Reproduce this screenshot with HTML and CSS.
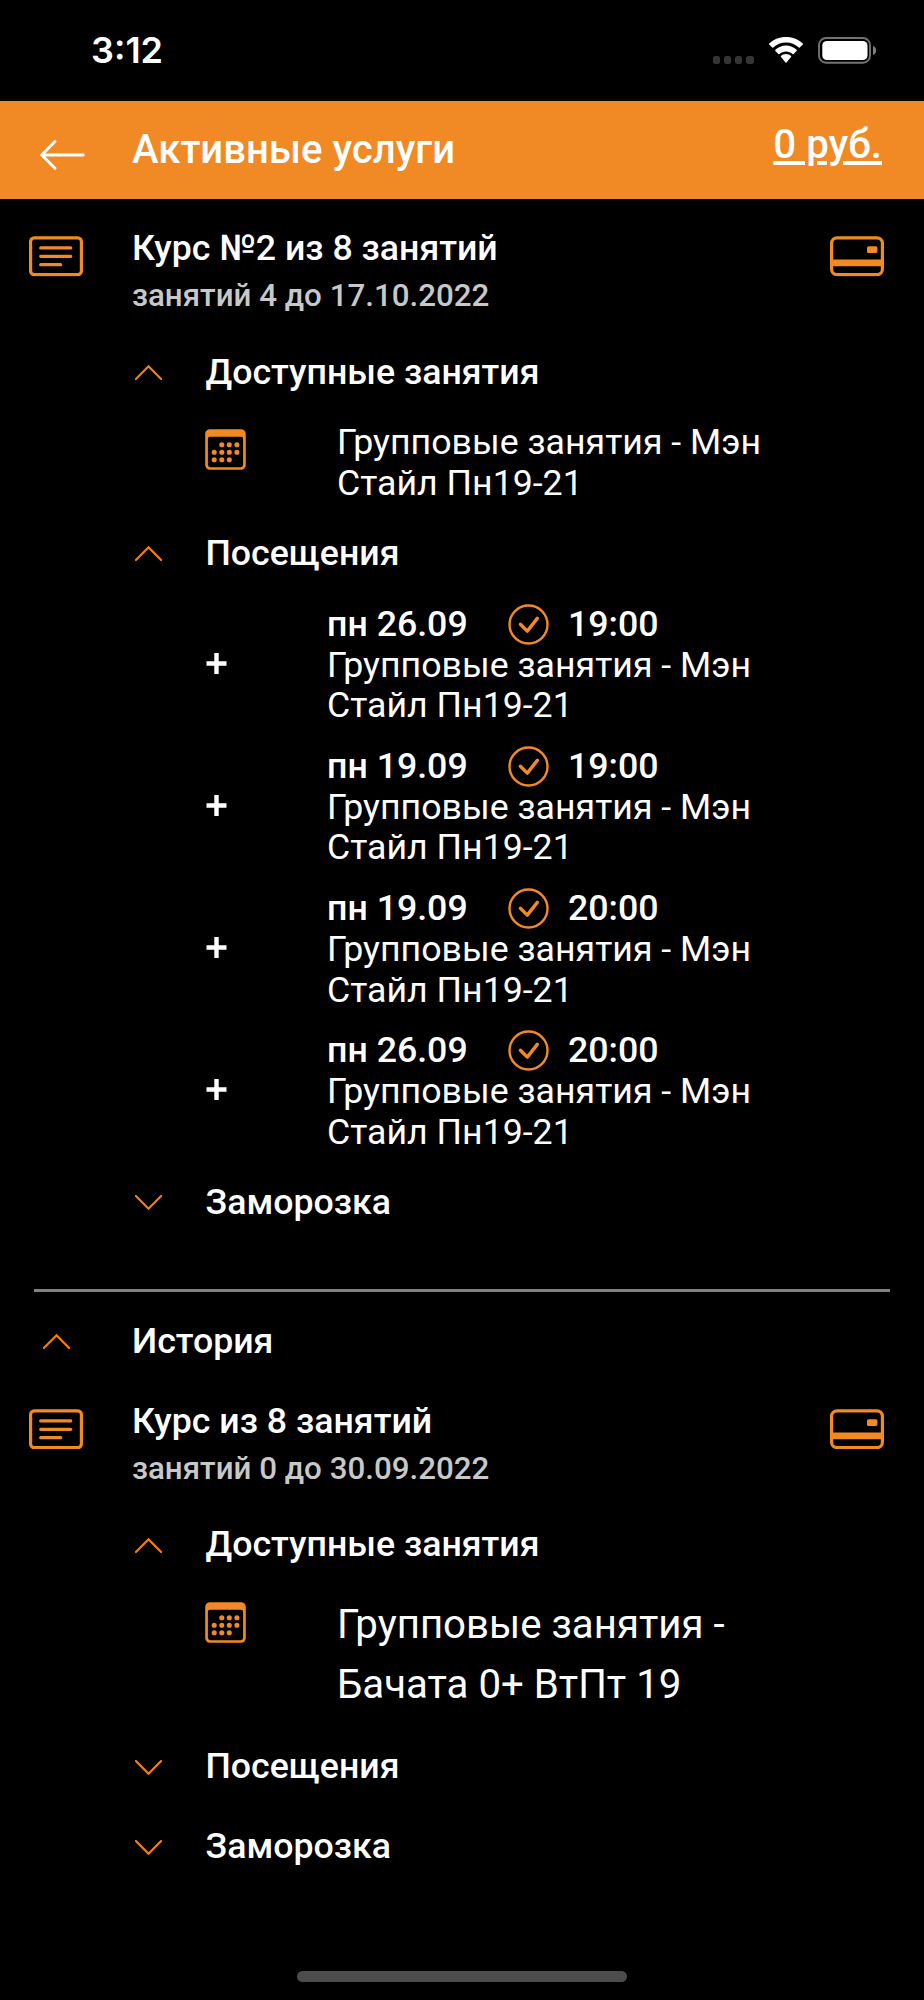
FILE: index.html
```html
<!DOCTYPE html>
<html lang="ru">

<head>
    <meta charset="UTF-8" />
    <title>Активные услуги</title>
    <link rel="stylesheet" href="styles.css">
</head>

<body>

    <!-- иконки -->
    <svg class="sprite">
        <symbol id="list" viewBox="0 0 54 40">
            <rect x="1.6" y="1.6" width="50.8" height="36.8" rx="3.6" fill="none" stroke="currentColor" stroke-width="3.2" />
            <path d="M11.7 11.7h30M11.7 20.1h30M11.7 28.4h20" fill="none" stroke="currentColor" stroke-width="3.2" stroke-linecap="round" />
        </symbol>
        <symbol id="card" viewBox="0 0 54 40">
            <rect x="1.6" y="1.6" width="50.8" height="36.8" rx="5.4" fill="none" stroke="currentColor" stroke-width="3.2" />
            <path d="M2 23.3h50v6.6H2z" fill="currentColor" />
            <rect x="37" y="10" width="10.4" height="6.8" rx="1.6" fill="currentColor" />
        </symbol>
        <symbol id="calendar" viewBox="0 0 41 41">
            <path fill="currentColor" fill-rule="evenodd" d="M5 .2h31a4.8 4.8 0 0 1 4.8 4.8v31a4.8 4.8 0 0 1-4.8 4.8H5A4.8 4.8 0 0 1 .2 36V5A4.8 4.8 0 0 1 5 .2zM5 7.8A2 2 0 0 0 2.9 9.8V35.8A2.6 2.6 0 0 0 5.4 38.3H35.6A2.6 2.6 0 0 0 38.1 35.8V9.8A2 2 0 0 0 36 7.8z" />
            <path d="M16.8 15.7h0M24.3 15.7h0M31.9 15.7h0M9.2 23.2h0M16.8 23.2h0M24.3 23.2h0M31.9 23.2h0M9.2 30.7h0M16.8 30.7h0M24.3 30.7h0" stroke="currentColor" stroke-width="5.1" stroke-linecap="round" />
        </symbol>
        <symbol id="check" viewBox="0 0 41 41">
            <circle cx="20.5" cy="20.5" r="19" fill="none" stroke="currentColor" stroke-width="2.4" />
            <path d="M12.4 20.2l6.9 6.9 10-12.7" fill="none" stroke="currentColor" stroke-width="3.4" stroke-linecap="round" stroke-linejoin="round" />
        </symbol>
        <symbol id="up" viewBox="0 0 27 15">
            <path d="M.9 14L13.5 1.3 26.1 14" fill="none" stroke="currentColor" stroke-width="2.1" stroke-linecap="round" />
        </symbol>
        <symbol id="down" viewBox="0 0 27 15">
            <path d="M.9 1L13.5 13.7 26.1 1" fill="none" stroke="currentColor" stroke-width="2.1" stroke-linecap="round" />
        </symbol>
        <symbol id="plus" viewBox="0 0 21 21">
            <path d="M.5 10.5h20M10.5 0v21" fill="none" stroke="currentColor" stroke-width="4.4" />
        </symbol>
    </svg>

    <div class="status">
        <span class="time">3:12</span>
        <div class="status-icons">
            <div class="dots"><i></i><i></i><i></i><i></i></div>
            <svg class="wifi" viewBox="0 0 36 26">
                <path fill="#fff" d="M18 5.4c4.9 0 9.4 1.9 12.8 5.1.3.3.7.3 1 0l3-3c.3-.3.3-.8 0-1.1C30.3 2.2 24.4-.1 18-.1S5.7 2.2 1.2 6.4c-.3.3-.3.8 0 1.1l3 3c.3.3.7.3 1 0C8.6 7.3 13.1 5.4 18 5.4zM18 14.4c2.5 0 4.8.9 6.6 2.5.3.3.7.3 1 0l3-3c.3-.3.3-.8 0-1.1-2.8-2.6-6.5-4.2-10.6-4.2s-7.8 1.6-10.6 4.2c-.3.3-.3.8 0 1.1l3 3c.3.3.7.3 1 0 1.8-1.6 4.1-2.5 6.6-2.5zM23 20c.3-.3.3-.8 0-1.1-1.3-1.1-3.1-1.8-5-1.8s-3.7.7-5 1.8c-.3.3-.3.8 0 1.1l4.5 5.4c.3.3.7.3 1 0z" />
            </svg>
            <svg class="battery" viewBox="0 0 59 27">
                <rect x="1" y="1" width="51" height="24.7" rx="7" fill="none" stroke="#737373" stroke-width="1.9" />
                <rect x="4.3" y="4" width="45.2" height="19" rx="4.6" fill="#fff" />
                <path d="M55 9c4.2 1.5 4.2 7.5 0 9z" fill="#7f7f7f" />
            </svg>
        </div>
    </div>

    <header class="header">
        <svg class="back" viewBox="0 0 45 30">
            <path d="M15 1.6L1.7 15 15 28.3M2 15h41.3" fill="none" stroke="#fff" stroke-width="2.9" stroke-linecap="round" stroke-linejoin="round" />
        </svg>
        <h1>Активные услуги</h1>
        <a class="balance">0 руб.</a>
    </header>

    <main>
        <section class="service">
            <div class="service-head">
                <svg class="wide-icon"><use href="#list" /></svg>
                <div class="service-text">
                    <h2>Курс №2 из 8 занятий</h2>
                    <p>занятий 4 до 17.10.2022</p>
                </div>
                <svg class="wide-icon"><use href="#card" /></svg>
            </div>

            <div class="row"><svg class="chevron"><use href="#up" /></svg>Доступные занятия</div>
            <div class="lesson">
                <svg class="icon"><use href="#calendar" /></svg>
                <p>Групповые занятия - Мэн<br>Стайл Пн19-21</p>
            </div>

            <div class="row"><svg class="chevron"><use href="#up" /></svg>Посещения</div>
            <div class="visit">
                <svg class="plus"><use href="#plus" /></svg>
                <div>
                    <div class="visit-time"><span class="date">пн 26.09</span><svg class="icon"><use href="#check" /></svg><span>19:00</span></div>
                    <p>Групповые занятия - Мэн<br>Стайл Пн19-21</p>
                </div>
            </div>
            <div class="visit">
                <svg class="plus"><use href="#plus" /></svg>
                <div>
                    <div class="visit-time"><span class="date">пн 19.09</span><svg class="icon"><use href="#check" /></svg><span>19:00</span></div>
                    <p>Групповые занятия - Мэн<br>Стайл Пн19-21</p>
                </div>
            </div>
            <div class="visit">
                <svg class="plus"><use href="#plus" /></svg>
                <div>
                    <div class="visit-time"><span class="date">пн 19.09</span><svg class="icon"><use href="#check" /></svg><span>20:00</span></div>
                    <p>Групповые занятия - Мэн<br>Стайл Пн19-21</p>
                </div>
            </div>
            <div class="visit">
                <svg class="plus"><use href="#plus" /></svg>
                <div>
                    <div class="visit-time"><span class="date">пн 26.09</span><svg class="icon"><use href="#check" /></svg><span>20:00</span></div>
                    <p>Групповые занятия - Мэн<br>Стайл Пн19-21</p>
                </div>
            </div>

            <div class="row"><svg class="chevron"><use href="#down" /></svg>Заморозка</div>
        </section>

        <hr>

        <div class="row history"><svg class="chevron"><use href="#up" /></svg>История</div>

        <section class="service past">
            <div class="service-head">
                <svg class="wide-icon"><use href="#list" /></svg>
                <div class="service-text">
                    <h2>Курс из 8 занятий</h2>
                    <p>занятий 0 до 30.09.2022</p>
                </div>
                <svg class="wide-icon"><use href="#card" /></svg>
            </div>

            <div class="row"><svg class="chevron"><use href="#up" /></svg>Доступные занятия</div>
            <div class="lesson large">
                <svg class="icon"><use href="#calendar" /></svg>
                <p>Групповые занятия -<br>Бачата 0+ ВтПт 19</p>
            </div>
            <div class="row"><svg class="chevron"><use href="#down" /></svg>Посещения</div>
            <div class="row"><svg class="chevron"><use href="#down" /></svg>Заморозка</div>
        </section>
    </main>

    <div class="home-bar"></div>

</body>

</html>
```

FILE: styles.css
```css
* {
    box-sizing: border-box;
}

body {
    margin: 0;
    height: 2000px;
    padding-bottom: 18px;
    display: flex;
    flex-direction: column;
    background-color: #000;
    color: #fff;
    font-family: Roboto, sans-serif;
    font-size: 35.7px;
    overflow: hidden;
}

h1,
h2,
p {
    margin: 0;
}

svg {
    display: block;
    flex-shrink: 0;
}

.sprite {
    display: none;
}

/* status bar */
.status {
    height: 100.6px;
    flex-shrink: 0;
    padding: 0 47px 0 91px;
    display: flex;
    justify-content: space-between;
    align-items: center;
}

.time {
    font-family: Inter, sans-serif;
    font-size: 36px;
    font-weight: 600;
}

.status-icons {
    display: flex;
    align-items: center;
}

.dots {
    display: flex;
    gap: 3.6px;
    padding-top: 19px;
    margin-right: 14.5px;
}

.dots i {
    width: 7.5px;
    height: 7.5px;
    border-radius: 2.5px;
    background-color: #353535;
}

.wifi {
    width: 36px;
    height: 26px;
    margin-right: 14px;
}

.battery {
    width: 59px;
    height: 27px;
}

/* header */
.header {
    height: 98px;
    flex-shrink: 0;
    padding: 0 42px 0 40px;
    display: flex;
    align-items: center;
    background-color: #f18924;
}

.back {
    width: 45px;
    height: 30px;
    margin: 10px 47px 0 0;
}

.header h1 {
    flex: 1;
    padding-bottom: 1px;
    font-size: 40.1px;
    font-weight: 500;
}

.balance {
    font-size: 40.2px;
    font-weight: 500;
    padding-bottom: 10px;
    text-decoration: underline;
}

/* services */
.service {
    padding-top: 26.5px;
}

.past {
    padding-top: 17px;
}

.service-head {
    display: flex;
    height: 106.5px;
    padding: 0 40px 0 29px;
}

.wide-icon {
    width: 54px;
    height: 40.5px;
    margin-top: 11px;
    color: #f18924;
}

.service-text {
    flex: 1;
    padding-left: 49px;
}

.service-text h2 {
    font-size: 35.7px;
    font-weight: 500;
    line-height: 46px;
}

.service-text p {
    font-size: 31.3px;
    font-weight: 500;
    line-height: 49.5px;
    color: #c8c8c8;
}

.row {
    display: flex;
    align-items: center;
    height: 80.2px;
    padding-left: 135px;
    font-weight: 500;
}

.chevron {
    width: 27px;
    height: 15px;
    margin: 2px 43.5px 0 0;
    color: #ff8000;
}

.history {
    padding-left: 43px;
}

.history .chevron {
    margin-right: 62px;
}

.icon {
    width: 41px;
    height: 41px;
    color: #f18924;
}

.lesson {
    display: flex;
    padding: 10.6px 0 9.4px 205px;
    line-height: 40.4px;
}

.lesson .icon {
    margin: 7px 91px 0 0;
}

.large {
    font-size: 40.2px;
    line-height: 60.2px;
    padding-bottom: 10.4px;
}

.visit {
    display: flex;
    height: 142.2px;
    padding: 11px 0 0 206px;
    line-height: 40.4px;
}

.plus {
    width: 21px;
    height: 21px;
    margin: 49px 100px 0 0;
}

.visit-time {
    display: flex;
    height: 41px;
    font-weight: 500;
}

.date {
    width: 181px;
}

.visit-time .icon {
    margin-right: 19px;
}

hr {
    width: 856px;
    height: 3px;
    margin: 47px 34px 9px;
    border: 0;
    background-color: #808080;
}

.home-bar {
    width: 330px;
    height: 11px;
    margin: auto auto 0 297px;
    border-radius: 6px;
    background-color: #4c4c4c;
}
```
